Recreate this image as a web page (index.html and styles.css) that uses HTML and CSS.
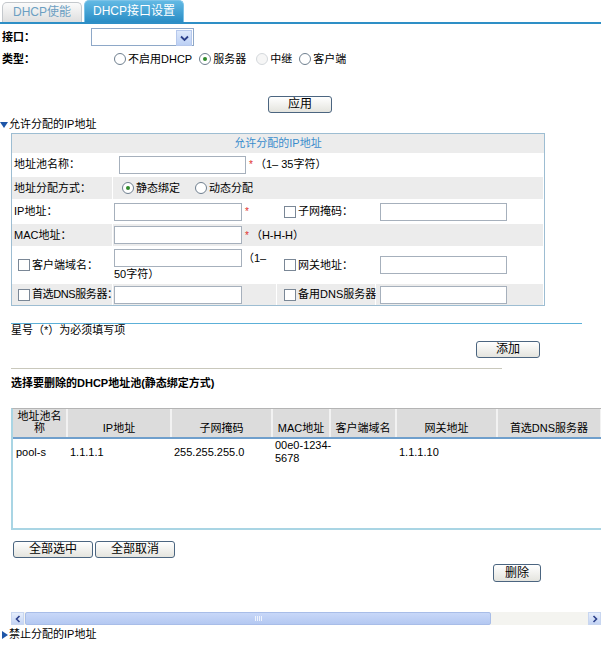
FILE: index.html
```html
<!DOCTYPE html>
<html>
<head>
<meta charset="utf-8">
<link rel="stylesheet" href="styles.css">
</head>
<body>
<div class="tabs">
  <div class="tab tab-off">DHCP使能</div>
  <div class="tab tab-on">DHCP接口设置</div>
</div>

<div class="top-row row-if">
  <span class="top-lbl">接口：</span>
  <div class="select"><span class="sel-btn"><svg width="9" height="7" viewBox="0 0 9 7"><path d="M1 1.5 L4.5 5 L8 1.5" fill="none" stroke="#2b3f8a" stroke-width="1.8"/></svg></span></div>
</div>
<div class="top-row row-type">
  <span class="top-lbl">类型：</span>
  <div class="radios">
    <span class="opt"><span class="radio"></span>不启用DHCP</span>
    <span class="opt"><span class="radio on"></span>服务器</span>
    <span class="opt"><span class="radio dis"></span>中继</span>
    <span class="opt"><span class="radio"></span>客户端</span>
  </div>
</div>
<div class="apply-wrap"><span class="btn btn-apply">应用</span></div>

<div class="sec-head"><span class="tri-down"></span>允许分配的IP地址</div>
<div class="box">
  <div class="box-title">允许分配的IP地址</div>
  <div class="fgrid">
    <div class="c lbl">地址池名称：</div>
    <div class="c span3 pad6"><span class="inp w127"></span><span class="star">*</span><span class="hint">（1– 35字符）</span></div>

    <div class="c alt lbl">地址分配方式：</div>
    <div class="c alt span3 pad9">
      <span class="opt"><span class="radio on"></span>静态绑定</span>
      <span class="opt opt2"><span class="radio"></span>动态分配</span>
    </div>

    <div class="c lbl">IP地址：</div>
    <div class="c pad1"><span class="inp w128"></span><span class="star">*</span></div>
    <div class="c pad7"><span class="chk"></span>子网掩码：</div>
    <div class="c pad4"><span class="inp w127"></span></div>

    <div class="c alt lbl">MAC地址：</div>
    <div class="c alt span3 pad1"><span class="inp w128"></span><span class="star">*</span><span class="hint">（H-H-H）</span></div>

    <div class="c lbl"><span class="chk chk-l"></span>客户端域名：</div>
    <div class="c pad1 wrapcell"><div class="line1"><span class="inp w128"></span><span class="hint small">（1–</span></div><div class="line2">50字符）</div></div>
    <div class="c pad7"><span class="chk"></span>网关地址：</div>
    <div class="c pad4"><span class="inp w127"></span></div>

    <div class="c alt lbl tight"><span class="chk chk-l"></span>首选DNS服务器：</div>
    <div class="c alt pad1"><span class="inp w128"></span></div>
    <div class="c alt pad7"><span class="chk"></span>备用DNS服务器：</div>
    <div class="c alt pad4"><span class="inp w127"></span></div>
  </div>
</div>

<div class="blue-line"></div>
<div class="note">星号（*）为必须填写项</div>
<div class="add-wrap"><span class="btn btn-add">添加</span></div>
<div class="gray-line"></div>
<div class="del-title">选择要删除的DHCP地址池(静态绑定方式)</div>

<div class="scroll-area">
  <div class="tbl-wrap">
    <table class="tbl">
      <colgroup>
        <col class="w54"><col class="w104"><col class="w101"><col class="w58"><col class="w66"><col class="w101"><col class="w104"><col class="w112">
      </colgroup>
      <thead>
        <tr><th>地址池名称</th><th>IP地址</th><th>子网掩码</th><th>MAC地址</th><th>客户端域名</th><th>网关地址</th><th>首选DNS服务器</th><th></th></tr>
      </thead>
      <tbody>
        <tr><td>pool-s</td><td>1.1.1.1</td><td>255.255.255.0</td><td>00e0-1234-<br>5678</td><td></td><td>1.1.1.10</td><td></td><td></td></tr>
      </tbody>
    </table>
  </div>
  <div class="sel-btns"><span class="btn btn-sel">全部选中</span><span class="btn btn-sel">全部取消</span></div>
  <div class="del-wrap"><span class="btn btn-del">删除</span></div>
</div>
<div class="hscroll">
  <span class="arrow"><svg width="6" height="8" viewBox="0 0 6 8"><path d="M4.5 1 L1.5 4 L4.5 7" fill="none" stroke="#2b3f8a" stroke-width="1.6"/></svg></span>
  <span class="thumb"><span class="grip"></span></span>
  <span class="track"></span>
  <span class="arrow"><svg width="6" height="8" viewBox="0 0 6 8"><path d="M1.5 1 L4.5 4 L1.5 7" fill="none" stroke="#2b3f8a" stroke-width="1.6"/></svg></span>
</div>
<div class="sec-head foot"><span class="tri-right"></span>禁止分配的IP地址</div>
</body>
</html>
```

FILE: styles.css
```css
html, body {
  margin: 0;
  padding: 0;
  background: #ffffff;
  overflow: hidden;
}
body {
  width: 601px;
  height: 646px;
  font-family: "Liberation Sans", "Noto Sans CJK SC", sans-serif;
  font-size: 11px;
  line-height: 13px;
  color: #000;
}

/* tabs */
.tabs {
  display: flex;
  align-items: flex-end;
  height: 22px;
  border-bottom: 2px solid #2e8fc6;
  padding-left: 2px;
  gap: 2px;
}
.tab {
  display: flex;
  align-items: center;
  justify-content: center;
  border-radius: 5px 5px 0 0;
  box-sizing: border-box;
  font-size: 12px;
}
.tab-off {
  width: 80px;
  height: 20px;
  border: 1px solid #c4c8cc;
  border-bottom: none;
  background: linear-gradient(#fbfbfb, #dedede);
  color: #6c9fc2;
}
.tab-on {
  width: 100px;
  height: 22px;
  background: linear-gradient(#62b9e4, #2a8dc5);
  color: #fff;
  border: 1px solid #7cc3e8;
  border-bottom: none;
}

/* top form rows */
.top-row {
  display: flex;
  align-items: center;
  height: 18px;
  padding-left: 2px;
}
.row-if { margin-top: 4px; }
.row-type { margin-top: 4px; }
.top-lbl {
  width: 89px;
  font-weight: bold;
}
.select {
  width: 103px;
  height: 18px;
  box-sizing: border-box;
  border: 1px solid #8ea8c8;
  background: #fff;
  display: flex;
  justify-content: flex-end;
  padding: 1px;
}
.sel-btn {
  width: 14px;
  height: 14px;
  background: linear-gradient(#dde8fb, #bcd0f4);
  border: 1px solid #b6c8ec;
  display: flex;
  align-items: center;
  justify-content: center;
}
.radios {
  display: flex;
  align-items: center;
  margin-left: 23px;
}
.opt {
  display: inline-flex;
  align-items: center;
  margin-right: 7px;
}
.radios .opt:nth-child(2) { margin-right: 10px; }
.radio {
  width: 10px;
  height: 10px;
  border: 1px solid #6f7f8f;
  border-radius: 50%;
  background: #fff;
  margin-right: 2px;
  position: relative;
  box-sizing: content-box;
  flex: none;
}
.radio.on::after {
  content: "";
  position: absolute;
  left: 3px;
  top: 3px;
  width: 4px;
  height: 4px;
  border-radius: 50%;
  background: #2f8a2a;
}
.radio.dis {
  border-color: #d4d8dc;
  background: #f6f6f6;
}

/* buttons */
.btn {
  display: inline-flex;
  align-items: center;
  justify-content: center;
  box-sizing: border-box;
  border: 1px solid #4b6580;
  border-radius: 3px;
  background: linear-gradient(#ffffff, #e4e4de);
  color: #000;
  font-size: 12px;
}
.apply-wrap {
  margin-top: 28px;
  padding-left: 268px;
  height: 17px;
  display: flex;
}
.btn-apply { width: 64px; height: 17px; }

/* section head */
.sec-head {
  margin-top: 5px;
  height: 13px;
  line-height: 13px;
  display: flex;
  align-items: center;
}
.tri-down {
  width: 0;
  height: 0;
  border-left: 4px solid transparent;
  border-right: 4px solid transparent;
  border-top: 6px solid #1e56a8;
  margin-right: 1px;
}
.tri-right {
  width: 0;
  height: 0;
  border-top: 4px solid transparent;
  border-bottom: 4px solid transparent;
  border-left: 6px solid #1e56a8;
  margin: 0 1px 0 2px;
}

/* box */
.box {
  margin: 2px 0 0 11px;
  width: 534px;
  box-sizing: border-box;
  border: 1px solid #9dbdd2;
}
.box-title {
  height: 19px;
  line-height: 19px;
  background: #ececec;
  color: #3a8ccc;
  text-align: center;
}
.fgrid {
  display: grid;
  grid-template-columns: 100px 163px 98px 167px;
  grid-template-rows: 23px 22px 23px 22px 36px 21px;
  gap: 1px;
  background: #fff;
}
.c {
  display: flex;
  align-items: center;
  background: #fff;
  white-space: nowrap;
}
.c.alt { background: #ececec; }
.lbl { padding-left: 2px; }
.tight { letter-spacing: -0.4px; }
.span3 { grid-column: span 3; }
.pad1 { padding-left: 1px; }
.pad4 { padding-left: 4px; }
.pad6 { padding-left: 6px; }
.pad7 { padding-left: 7px; }
.pad9 { padding-left: 9px; }
.inp {
  display: inline-block;
  height: 18px;
  box-sizing: border-box;
  border: 1px solid #a6b0bc;
  background: #fff;
  flex: none;
}
.w127 { width: 127px; }
.w128 { width: 128px; }
.star {
  color: #e0302c;
  margin-left: 3px;
  font-size: 10px;
}
.hint { margin-left: 2px; }
.opt2 { margin-left: 8px; }
.chk {
  width: 10px;
  height: 10px;
  border: 1px solid #7a8796;
  background: #fff;
  margin-right: 2px;
  flex: none;
}
.chk-l { margin-left: 4px; }
.wrapcell {
  flex-direction: column;
  align-items: flex-start;
  justify-content: flex-start;
  padding-top: 2px;
}
.line1 {
  display: flex;
  align-items: flex-start;
}
.line1 .hint { margin-left: 1px; margin-top: 3px; }
.line2 { margin-top: 1px; line-height: 13px; }

/* after box */
.blue-line {
  margin: 17px 0 0 11px;
  width: 571px;
  height: 1px;
  background: #5cb0d8;
}
.note {
  margin-left: 11px;
  height: 13px;
  line-height: 13px;
}
.add-wrap {
  margin-top: 4px;
  padding-left: 476px;
  display: flex;
}
.btn-add { width: 64px; height: 17px; }
.gray-line {
  margin: 10px 0 0 11px;
  width: 491px;
  height: 1px;
  background: #c9c8bc;
}
.del-title {
  margin: 8px 0 0 11px;
  font-weight: bold;
  height: 13px;
  line-height: 13px;
}

/* table area */
.scroll-area {
  margin: 18px 0 0 11px;
  width: 590px;
  height: 204px;
  overflow: hidden;
}
.tbl-wrap {
  width: 720px;
  height: 122px;
  box-sizing: border-box;
  border-top: 1px solid #b4b4b4;
  border-left: 2px solid #a9d5e4;
  border-bottom: 2px solid #a9d5e4;
}
.tbl {
  border-collapse: collapse;
  table-layout: fixed;
  width: 700px;
}
.w54 { width: 54px; }
.w58 { width: 58px; }
.w66 { width: 66px; }
.w101 { width: 101px; }
.w104 { width: 104px; }
.w112 { width: 112px; }
.tbl th {
  background: #dcdcdc;
  font-weight: normal;
  height: 25px;
  padding: 0 2px 3px;
  vertical-align: bottom;
  text-align: center;
  border-right: 2px solid #f2f2f2;
  border-bottom: 2px solid #6f9fcc;
  line-height: 12px;
  white-space: normal;
}
.tbl td {
  height: 26px;
  padding: 0 3px;
  vertical-align: middle;
  line-height: 13px;
  white-space: nowrap;
}
.sel-btns {
  margin-top: 11px;
  padding-left: 2px;
  display: flex;
  gap: 2px;
}
.btn-sel { width: 80px; height: 17px; }
.del-wrap {
  margin-top: 6px;
  padding-left: 482px;
  display: flex;
}
.btn-del { width: 48px; height: 18px; }

/* scrollbar */
.hscroll {
  margin: 0 0 0 11px;
  width: 590px;
  height: 13px;
  display: flex;
  background: #f4f4f0;
}
.arrow {
  width: 13px;
  height: 13px;
  box-sizing: border-box;
  border: 1px solid #c8d6f0;
  background: linear-gradient(#e6eefc, #c4d4f4);
  display: flex;
  align-items: center;
  justify-content: center;
  flex: none;
}
.thumb {
  width: 466px;
  margin-left: 1px;
  box-sizing: border-box;
  border: 1px solid #a8bde8;
  border-radius: 2px;
  background: linear-gradient(#c8d8f8, #b4c8f2);
  display: flex;
  align-items: center;
  justify-content: center;
}
.grip {
  width: 7px;
  height: 5px;
  background: repeating-linear-gradient(90deg, #eef3fd 0 1px, transparent 1px 2px);
}
.track { flex: 1; }
.sec-head.foot { margin-top: 3px; }
```
